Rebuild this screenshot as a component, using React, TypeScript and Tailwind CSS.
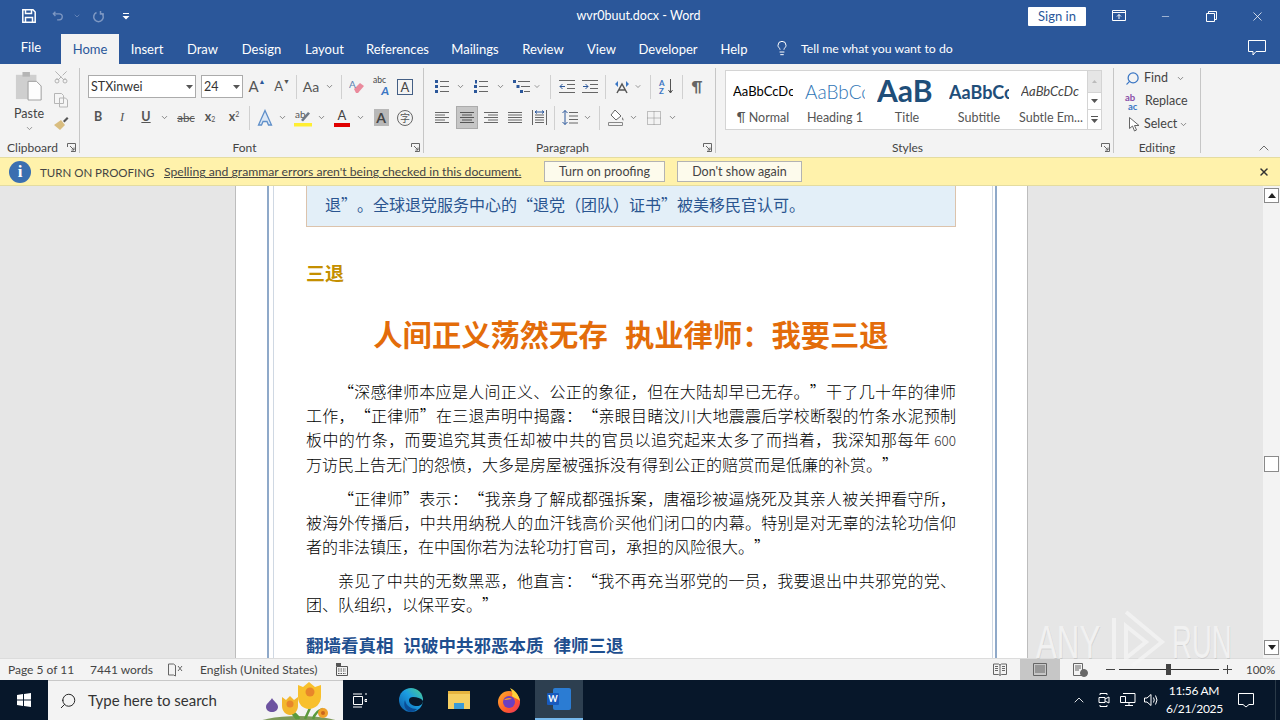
import React from "react";
import { ChevronDown, ChevronUp, Lightbulb, Search, Minus, X, Scissors } from "lucide-react";

const Chev = ({ c = "text-[#666]" }: { c?: string }) => <ChevronDown className={`w-[9px] h-[9px] ${c}`} strokeWidth={2} />;
const Sep = ({ c }: { c: string }) => <div className={`w-px h-[24px] bg-[#d0d0d0] shrink-0 ${c}`} />;

function Cell({ c, children }: { c: string; children?: React.ReactNode }) {
  return <div className={`flex items-center justify-center shrink-0 h-full ${c}`}>{children}</div>;
}

const Launcher = () => (
  <svg width="9" height="9" viewBox="0 0 9 9" className="absolute right-[3px] top-[5px]" fill="none" stroke="#666">
    <path d="M.5 4V.5H8.500V8.500H4M3 3l4 4M7 4.500V7H4.500" />
  </svg>
);

function Lines({ n, w = 14, color = "#666", align = "left" }: { n: number; w?: number; color?: string; align?: string }) {
  const rows = Array.from({ length: n }, (_, i) => i);
  return (
    <svg width={w} height="13" viewBox={`0 0 ${w} 13`} stroke={color}>
      {rows.map((i) => {
        const short = i % 2 === 1 && align !== "full";
        const len = short ? w - 4 : w;
        const x = align === "right" ? w - len : align === "center" ? (w - len) / 2 : 0;
        return <path key={i} d={`M${x} ${1.5 + i * 2.5}h${len}`} />;
      })}
    </svg>
  );
}

function Group({ c, label, launcher = true, children }: { c: string; label: string; launcher?: boolean; children: React.ReactNode }) {
  return (
    <div className={`flex flex-col shrink-0 h-full ${c}`}>
      <div className="flex-1 min-h-0">{children}</div>
      <div className={`relative h-[19px] text-center text-[12px] leading-[19px] text-[#444] ${launcher ? "pr-[14px]" : ""}`}>
        {label}
        {launcher && <Launcher />}
      </div>
    </div>
  );
}

const GroupSep = () => <div className="w-px h-[85px] mt-[4px] bg-[#c6c6c6] shrink-0" />;

const tabs = [
  ["Insert", "w-[56px]"],
  ["Draw", "w-[55px]"],
  ["Design", "w-[63px]"],
  ["Layout", "w-[63px]"],
  ["References", "w-[83px]"],
  ["Mailings", "w-[72px]"],
  ["Review", "w-[64px]"],
  ["View", "w-[53px]"],
  ["Developer", "w-[80px]"],
  ["Help", "w-[52px]"],
];

function TitleBar() {
  return (
    <div className="h-[32px] flex items-center text-white">
      <Cell c="w-[58px] justify-start pl-[22px]">
        <svg width="14" height="14" viewBox="0 0 14 14" fill="none" stroke="#fff" strokeWidth="1.500">
          <path d="M.800.800H11L13.200 3V13.200H.800Z" />
          <path d="M3.500 1v3.500h6V1M3.500 13V8.500h7V13" />
        </svg>
      </Cell>
      <Cell c="w-[12px] -ml-[6px]">
        <svg width="14" height="12" viewBox="0 0 14 12" fill="none" stroke="#7d97c2" strokeWidth="1.500">
          <path d="M4 1 1.500 3.500 4 6M2 3.500h6.500a3.500 3.500 0 0 1 0 7H6" />
        </svg>
      </Cell>
      <Cell c="w-[10px] ml-[8px]"><ChevronDown className="w-[8px] h-[8px] text-[#7d97c2]" /></Cell>
      <Cell c="w-[14px] ml-[9px]">
        <svg width="13" height="13" viewBox="0 0 13 13" fill="none" stroke="#7d97c2" strokeWidth="1.500">
          <path d="M8.500 2.500a4.800 4.800 0 1 1-4 0M8.500 1v3H12" />
        </svg>
      </Cell>
      <Cell c="w-[10px] ml-[16px]">
        <svg width="8" height="8" viewBox="0 0 8 8" fill="#fff"><path d="M1 1h6v1H1zM.500 4h7L4 7.500z" /></svg>
      </Cell>
      <div className="ml-[445px] w-[125px] text-center text-[12.500px] whitespace-nowrap">wvr0buut.docx - Word</div>
      <div className="ml-[327px] w-[58px] h-[19px] bg-white rounded-[1px] text-[#2b579a] text-[13px] leading-[19px] text-center">Sign in</div>
      <Cell c="w-[14px] ml-[26px]">
        <svg width="14" height="12" viewBox="0 0 14 12" fill="none" stroke="#fff">
          <path d="M.500.500h13v10H.500zM.500 2.500h13M7 9V4.500M5 6.500l2-2 2 2" />
        </svg>
      </Cell>
      <Cell c="w-[11px] ml-[34px]"><Minus className="w-[11px] h-[11px]" strokeWidth={1.200} /></Cell>
      <Cell c="w-[11px] ml-[35px]">
        <svg width="11" height="11" viewBox="0 0 11 11" fill="none" stroke="#fff"><path d="M.500 2.500h8v8h-8zM2.500 2.500v-2h8v8h-2" /></svg>
      </Cell>
      <Cell c="w-[12px] ml-[34px]"><X className="w-[15px] h-[15px] shrink-0" strokeWidth={1.200} /></Cell>
    </div>
  );
}

function TabBar() {
  return (
    <div className="h-[32px] flex text-white text-[13px]">
      <div className="w-[61px] pt-[6px] pl-[1px] text-center">File</div>
      <div className="w-[58px] mt-[2px] bg-[#f3f3f3] text-[#2b579a] text-center pt-[6px]">Home</div>
      {tabs.map(([name, w]) => (
        <div key={name} className={`${w} text-center pt-[8px] whitespace-nowrap`}>{name}</div>
      ))}
      <div className="ml-[14px] w-[14px] pt-[8px]"><Lightbulb className="w-[16px] h-[16px]" strokeWidth={1.500} /></div>
      <div className="ml-[13px] pt-[8px] text-[12.300px] whitespace-nowrap">Tell me what you want to do</div>
      <div className="ml-auto mr-[14px] pt-[8px]">
        <svg width="18" height="16" viewBox="0 0 18 16" fill="none" stroke="#fff"><path d="M.500.500h17v11H8l-3 3.500v-3.500H.500z" /></svg>
      </div>
    </div>
  );
}

function Clipboard() {
  return (
    <Group c="w-[79px]" label="Clipboard">
      <div className="flex h-full">
        <div className="w-[58px] flex flex-col items-center pt-[6px]">
          <svg width="28" height="32" viewBox="0 0 30 32">
            <path d="M1 4h22v26H1z" fill="#cfcfcf" />
            <path d="M8 1h8v5H8z" fill="#b5b5b5" />
            <path d="M14 11h9l5 5v15H14z" fill="#fdfdfd" stroke="#9a9a9a" />
          </svg>
          <div className="text-[12.500px] leading-[16px] mt-[4px] text-[#444]">Paste</div>
          <ChevronDown className="w-[9px] h-[9px] mt-[2px] text-[#777]" />
        </div>
        <div className="w-[16px] -ml-[5px] flex flex-col items-center pt-[5px] gap-[7px]">
          <Scissors className="w-[16px] h-[16px] text-[#a9a9a9] rotate-[-90deg]" strokeWidth={1.300} />
          <svg width="16" height="16" viewBox="0 0 16 16" fill="#f5f5f5" stroke="#b5b5b5"><path d="M1.500 1.500h7l2 2v8h-9zM6.500 6h6l2 2v7h-8z" /></svg>
          <svg width="16" height="16" viewBox="0 0 16 16"><path d="M1 10 8 5l4 5-5 5z" fill="#d9bd7f" /><path d="m10 6 4-4 1.500 1.500-4 4z" fill="#555" /></svg>
        </div>
      </div>
    </Group>
  );
}

function Font() {
  return (
    <Group c="w-[343px]" label="Font">
      <div className="pt-[11px]">
        <div className="flex h-[23px] items-center">
          <div className="ml-[8px] w-[108px] h-[23px] bg-white border border-[#ababab] flex items-center justify-between pl-[2px] pr-[1px] text-[12.500px] text-[#333]">
            <span className="pt-[1px]">STXinwei</span>
            <svg width="7" height="4" viewBox="0 0 7 4" fill="#555" className="mr-[1px]"><path d="M0 0h7L3.500 4z" /></svg>
          </div>
          <div className="ml-[5px] w-[42px] h-[23px] bg-white border border-[#ababab] flex items-center justify-between pl-[2px] pr-[1px] text-[12.500px] text-[#333]">
            <span className="pt-[1px]">24</span>
            <svg width="7" height="4" viewBox="0 0 7 4" fill="#555" className="mr-[1px]"><path d="M0 0h7L3.500 4z" /></svg>
          </div>
          <Cell c="w-[24px] ml-[2px] text-[15px] text-[#555]">A<span className="text-[7px] -mt-[10px] text-[#2b579a]">▲</span></Cell>
          <Cell c="w-[24px] ml-[1px] text-[13px] text-[#555]">A<span className="text-[7px] -mt-[10px] text-[#555]">▼</span></Cell>
          <Sep c="ml-[2px]" />
          <Cell c="w-[24px] ml-[2px] text-[14px] text-[#555]">Aa</Cell>
          <Cell c="w-[12px]"><Chev /></Cell>
          <Sep c="ml-[6px]" />
          <Cell c="w-[24px] ml-[3px]">
            <svg width="16" height="16" viewBox="0 0 16 16"><path d="m5 10 6-6 4 3-6 7H7z" fill="#ea8a9c" /><text x="0" y="9" fontSize="10" fill="#5b7fb0">A</text></svg>
          </Cell>
          <Cell c="w-[24px]">
            <div className="relative w-[16px] h-[18px] leading-none">
              <span className="absolute left-0 -top-[2px] text-[8.500px] text-[#444]">abc</span>
              <span className="absolute right-0 top-[7px] text-[12px] italic font-bold text-[#3a76c4]">A</span>
            </div>
          </Cell>
          <Cell c="w-[24px]"><div className="w-[16px] h-[16px] border border-[#445f85] text-[13px] leading-[15px] text-center text-[#444]">A</div></Cell>
        </div>
        <div className="flex h-[23px] items-center mt-[8px] text-[#555]">
          <Cell c="w-[24px] ml-[6px] text-[12.500px] font-bold">B</Cell>
          <Cell c="w-[24px] text-[12.500px] italic font-['Liberation_Serif',serif]">I</Cell>
          <Cell c="w-[24px] text-[12.500px] font-bold underline">U</Cell>
          <Cell c="w-[12px]"><Chev /></Cell>
          <Cell c="w-[24px] ml-[4px] text-[11.500px] line-through">abc</Cell>
          <Cell c="w-[24px] text-[12.500px] font-bold">x<sub className="text-[7px] font-normal">2</sub></Cell>
          <Cell c="w-[24px] text-[12.500px] font-bold">x<sup className="text-[7px] font-normal">2</sup></Cell>
          <Sep c="ml-[3px]" />
          <Cell c="w-[24px] ml-[3px]">
            <svg width="18" height="18" viewBox="0 0 18 18" fill="#dbe7f5" stroke="#5f8fc9" strokeWidth="1.300"><path d="M9 1.500 15.500 16H12.500L11 12.500H7L5.500 16H2.500Z" /></svg>
          </Cell>
          <Cell c="w-[10px]"><Chev /></Cell>
          <Cell c="w-[24px] ml-[4px]">
            <div className="w-[18px] h-[18px] relative leading-none">
              <span className="absolute left-[1px] top-0 text-[10px] text-[#555]">ab</span>
              <svg width="18" height="18" viewBox="0 0 18 18" className="absolute inset-0"><path d="m7 11 7-8 2 1.500-7 8z" fill="#6f7a87" /><path d="M0 14h18v3.500H0z" fill="#ffee33" /></svg>
            </div>
          </Cell>
          <Cell c="w-[10px] ml-[1px]"><Chev /></Cell>
          <Cell c="w-[24px] ml-[4px]">
            <div className="flex flex-col items-center leading-none">
              <span className="text-[13px] text-[#444] h-[13px]">A</span>
              <span className="w-[16px] h-[4px] mt-[1px] bg-[#e00000]" />
            </div>
          </Cell>
          <Cell c="w-[10px] ml-[1px]"><Chev /></Cell>
          <Cell c="w-[24px] ml-[4px]"><div className="w-[15px] h-[17px] bg-[#b8b8b8] text-[14px] leading-[17px] text-center font-bold text-[#444]">A</div></Cell>
          <Cell c="w-[24px]"><div className="w-[16px] h-[16px] rounded-full border border-[#666] text-[10px] leading-[14px] text-center font-['Noto_Sans_CJK_SC',sans-serif]">字</div></Cell>
        </div>
      </div>
    </Group>
  );
}

function Paragraph() {
  return (
    <Group c="w-[291px]" label="Paragraph">
      <div className="pt-[11px]">
        <div className="flex h-[23px] items-center">
          <Cell c="w-[24px] ml-[6px]">
            <svg width="14" height="13" viewBox="0 0 14 13" stroke="#666"><path d="M5 1.500h9M5 6.500h9M5 11.500h9" /><path d="M0 0h3v3H0zM0 5h3v3H0zM0 10h3v3H0z" fill="#2b579a" stroke="none" /></svg>
          </Cell>
          <Cell c="w-[12px]"><Chev /></Cell>
          <Cell c="w-[24px] ml-[3px]">
            <svg width="14" height="13" viewBox="0 0 14 13" stroke="#666"><path d="M5 1.500h9M5 6.500h9M5 11.500h9" /><path d="M1 0h2v3.500H1zM0 5h3v3H0zM0 10h3v3H0z" fill="#2b579a" stroke="none" /></svg>
          </Cell>
          <Cell c="w-[12px] ml-[1px]"><Chev /></Cell>
          <Cell c="w-[24px] ml-[3px]">
            <svg width="17" height="13" viewBox="0 0 17 13" stroke="#666"><path d="M5 1.500h12M8 6.500h9M11 11.500h6" /><path d="M0 0h3v3H0zM3.500 5h3v3h-3zM7 10h3v3H7z" fill="#2b579a" stroke="none" /></svg>
          </Cell>
          <Cell c="w-[8px]"><Chev /></Cell>
          <Sep c="ml-[9px]" />
          <Cell c="w-[24px] ml-[4px]">
            <svg width="16" height="13" viewBox="0 0 16 13" stroke="#666"><path d="M0 .500h16M8 4.500h8M8 8.500h8M0 12.500h16" /><path d="M6 6.500H1M3.500 4 1 6.500 3.500 9" stroke="#2b579a" fill="none" /></svg>
          </Cell>
          <Cell c="w-[22px]">
            <svg width="16" height="13" viewBox="0 0 16 13" stroke="#666"><path d="M0 .500h16M8 4.500h8M8 8.500h8M0 12.500h16" /><path d="M1 6.500h5M3.500 4 6 6.500 3.500 9" stroke="#2b579a" fill="none" /></svg>
          </Cell>
          <Sep c="ml-[4px]" />
          <Cell c="w-[24px] ml-[4px]">
            <svg width="16" height="14" viewBox="0 0 16 14" fill="none"><path d="M3 13 8 4l5 9M5 10h6" stroke="#555" strokeWidth="1.500" /><path d="M1 4 4 1v6zM15 4l-3-3v6z" fill="#3a76c4" /></svg>
          </Cell>
          <Cell c="w-[8px]"><Chev /></Cell>
          <Sep c="ml-[8px]" />
          <Cell c="w-[24px] ml-[3px]">
            <div className="relative w-[14px] h-[16px] leading-none font-bold text-[8px] text-[#3a76c4]">
              <span className="absolute left-0 top-0">A</span>
              <span className="absolute left-0 top-[8px]">Z</span>
              <svg width="5" height="15" viewBox="0 0 5 15" className="absolute right-0 top-0" fill="none" stroke="#555"><path d="M2.500 0v14M.500 11l2 3 2-3" /></svg>
            </div>
          </Cell>
          <Sep c="ml-[4px]" />
          <Cell c="w-[24px] ml-[2px] text-[15px] font-bold text-[#666]">¶</Cell>
        </div>
        <div className="flex h-[23px] items-center mt-[8px]">
          <Cell c="w-[24px] ml-[6px]"><Lines n={5} /></Cell>
          <Cell c="w-[22px] ml-[2px] bg-[#c6c6c6] border border-[#ababab]"><Lines n={5} align="center" color="#555" /></Cell>
          <Cell c="w-[24px] ml-[1px]"><Lines n={5} align="right" /></Cell>
          <Cell c="w-[24px]"><Lines n={5} align="full" /></Cell>
          <Cell c="w-[24px]">
            <svg width="15" height="15" viewBox="0 0 15 15" fill="none" stroke="#666"><path d="M.500 0v15M14.500 0v15M3 5h9M3 7.500h9M3 10h9M3 12.500h9" /><path d="M3 2h9M5 .500 3 2l2 1.500M10 .500 12 2l-2 1.500" stroke="#2b579a" /></svg>
          </Cell>
          <Sep c="ml-[3px]" />
          <Cell c="w-[24px] ml-[3px]">
            <svg width="16" height="15" viewBox="0 0 16 15" fill="none" stroke="#666"><path d="M7 2.500h9M7 6h9M7 9.500h9M7 13h9" /><path d="M3 .500v14M.500 3 3 .500 5.500 3M.500 12 3 14.500 5.500 12" stroke="#2b579a" /></svg>
          </Cell>
          <Cell c="w-[10px]"><Chev /></Cell>
          <Sep c="ml-[7px]" />
          <Cell c="w-[24px] ml-[4px]">
            <svg width="17" height="17" viewBox="0 0 17 17" fill="none"><path d="m7 1 6 6-5 4-5-5z" fill="#fff" stroke="#666" /><path d="M14 8q2 2 1.500 3.500-1.500 0-1.500-3.500z" fill="#666" /><path d="M.500 13.500h14v3H.500z" fill="#f3f3f3" stroke="#888" /></svg>
          </Cell>
          <Cell c="w-[10px]"><Chev /></Cell>
          <Cell c="w-[24px] ml-[4px]">
            <svg width="14" height="14" viewBox="0 0 14 14" fill="none" stroke="#888" strokeDasharray="1 1"><path d="M.500.500h13v13H.500zM7 .500v13M.500 7h13" /></svg>
          </Cell>
          <Cell c="w-[10px] ml-[1px]"><Chev /></Cell>
        </div>
      </div>
    </Group>
  );
}

function StyleItem({ preview, label }: { preview: React.ReactNode; label: string }) {
  return (
    <div className="w-[72px] flex flex-col items-center overflow-hidden">
      <div className="h-[36px] w-[60px] overflow-hidden flex items-center whitespace-nowrap">{preview}</div>
      <div className="text-[12.500px] leading-[16px] text-[#555] whitespace-nowrap">{label}</div>
    </div>
  );
}

function Styles() {
  return (
    <Group c="w-[397px]" label="Styles">
      <div className="pt-[6px] pl-[9px]">
        <div className="w-[377px] h-[60px] bg-white border border-[#d4d4d4] flex">
          <div className="flex flex-1 pl-[1px] pt-[3px]">
            <StyleItem preview={<span className="text-[13px] text-black">AaBbCcDc</span>} label="¶ Normal" />
            <StyleItem preview={<span className="text-[19px] text-[#2e74b5] font-light">AaBbCc</span>} label="Heading 1" />
            <StyleItem preview={<span className="text-[30px] font-bold text-[#1f4e79] leading-[30px] pb-[4px]">AaB</span>} label="Title" />
            <StyleItem preview={<span className="text-[18px] font-bold text-[#1f4e79]">AaBbCc</span>} label="Subtitle" />
            <StyleItem preview={<span className="text-[13px] italic text-[#444]">AaBbCcDc</span>} label="Subtle Em..." />
          </div>
          <div className="w-[14px] flex flex-col border-l border-[#d4d4d4]">
            <div className="h-[21px] bg-[#e6e6e6] flex items-center justify-center"><svg width="5" height="3" viewBox="0 0 5 3" fill="#bbb"><path d="M0 3h5L2.500 0z" /></svg></div>
            <div className="h-[18px] border-y border-[#d4d4d4] flex items-center justify-center"><svg width="7" height="4" viewBox="0 0 7 4" fill="#555"><path d="M0 0h7L3.500 4z" /></svg></div>
            <div className="flex-1 flex flex-col gap-[2px] items-center justify-center"><span className="w-[7px] h-px bg-[#555]" /><svg width="7" height="4" viewBox="0 0 7 4" fill="#555"><path d="M0 0h7L3.500 4z" /></svg></div>
          </div>
        </div>
      </div>
    </Group>
  );
}

function Editing() {
  return (
    <Group c="w-[86px]" label="Editing" launcher={false}>
      <div className="pt-[3px] pl-[11px] text-[12.500px] text-[#444]">
        <div className="flex items-center h-[23px]">
          <Search className="w-[15px] h-[15px] text-[#3a76c4] -scale-x-100" strokeWidth={2} />
          <span className="ml-[4px]">Find</span>
          <ChevronDown className="w-[9px] h-[9px] ml-[8px] text-[#666]" />
        </div>
        <div className="flex items-center h-[23px]">
          <div className="w-[16px] text-[9.500px] leading-[9px] font-bold"><span className="text-[#8a4fa8] block">ab</span><span className="text-[#3a76c4] block pl-[3px]">ac</span></div>
          <span className="ml-[4px]">Replace</span>
        </div>
        <div className="flex items-center h-[23px]">
          <svg width="11" height="15" viewBox="0 0 11 15" fill="#fff" stroke="#666" className="ml-[4px]"><path d="M.500.500v11l3-2.500 2 5 2-1-2-4.500h4.500z" /></svg>
          <span className="ml-[4px]">Select</span>
          <ChevronDown className="w-[9px] h-[9px] ml-[2px] text-[#666]" />
        </div>
      </div>
    </Group>
  );
}

function Ribbon() {
  return (
    <div className="h-[93px] bg-[#f3f3f3] flex">
      <Clipboard />
      <GroupSep />
      <Font />
      <GroupSep />
      <Paragraph />
      <GroupSep />
      <Styles />
      <GroupSep />
      <Editing />
      <GroupSep />
      <div className="flex-1 flex justify-end items-end pr-[8px] pb-[1px]">
        <ChevronUp className="w-[16px] h-[16px] text-[#555]" strokeWidth={1.300} />
      </div>
    </div>
  );
}

function ProofBar() {
  return (
    <div className="h-[29px] bg-[#fff2ab] border-y border-[#e4dca0] flex items-center text-[12.500px] text-[#444]">
      <div className="ml-[9px] w-[22px] h-[22px] rounded-full bg-[#3a6fb0] text-white flex items-center justify-center font-bold text-[17px] font-['Liberation_Serif',serif]">i</div>
      <span className="ml-[9px] w-[124px] pt-[2px] text-[11.500px] whitespace-nowrap">TURN ON PROOFING</span>
      <span className="underline w-[380px] pt-[2px] text-[12.200px] whitespace-nowrap">Spelling and grammar errors aren't being checked in this document.</span>
      <div className="w-[121px] h-[21px] bg-[#fdfbec] border border-[#b3b3b3] text-center leading-[19px]">Turn on proofing</div>
      <div className="ml-[12px] w-[125px] h-[21px] bg-[#fdfbec] border border-[#b3b3b3] text-center leading-[19px]">Don't show again</div>
      <X className="ml-auto mr-[10px] w-[12px] h-[12px] text-[#333]" strokeWidth={3} />
    </div>
  );
}

const paragraphs: React.ReactNode[][] = [
  [
    "“深感律师本应是人间正义、公正的象征，但在大陆却早已无存。”干了几十年的律师",
    "工作，“正律师”在三退声明中揭露：“亲眼目睹汶川大地震震后学校断裂的竹条水泥预制",
    <>板中的竹条，而要追究其责任却被中共的官员以追究起来太多了而挡着，我深知那每年 <span className="text-[13.500px] text-[#333]">600</span></>,
    "万访民上告无门的怨愤，大多是房屋被强拆没有得到公正的赔赏而是低廉的补赏。”",
  ],
  [
    "“正律师”表示：“我亲身了解成都强拆案，唐福珍被逼烧死及其亲人被关押看守所，",
    "被海外传播后，中共用纳税人的血汗钱高价买他们闭口的内幕。特别是对无辜的法轮功信仰",
    "者的非法镇压，在中国你若为法轮功打官司，承担的风险很大。”",
  ],
  [
    "亲见了中共的无数黑恶，他直言：“我不再充当邪党的一员，我要退出中共邪党的党、",
    "团、队组织，以保平安。”",
  ],
];

function Page() {
  return (
    <div className="w-[793px] shrink-0 bg-white border-x border-[#bdbdbd] pl-[31px] pr-[30px] overflow-hidden font-['Noto_Sans_CJK_SC',sans-serif] [text-spacing-trim:space-all]">
      <div className="h-full border-x-2 border-x-[#8fa9c9] pl-[4px] pr-[2px]">
        <div className="h-full border-x border-x-[#cfd8e3] pl-[32px] pr-[36px]">
          <div className="h-[41px] bg-[#e3eff8] border-x border-b border-[#dcc3ac] pl-[18px] pt-[6px] text-[16px] leading-[24px] text-[#2a5590] whitespace-nowrap">
            退”。全球退党服务中心的“退党（团队）证书”被美移民官认可。
          </div>
          <div className="mt-[34px] text-[19px] leading-[24px] font-bold text-[#c48f00]">三退</div>
          <div className="mt-[28px] text-center text-[29.300px] leading-[40px] font-bold text-[#e36c0a] whitespace-pre [word-spacing:2px]">人间正义荡然无存  执业律师：我要三退</div>
          <div className="mt-[26px] text-[16px] leading-[24px] font-light text-black">
            {paragraphs.map((lines, i) => (
              <div key={i} className={i > 0 ? "mt-[10px]" : ""}>
                {lines.map((line, j) => (
                  <div key={j} className={`${j === lines.length - 1 ? "" : "text-justify [text-align-last:justify]"} ${j === 0 ? "indent-[32px]" : ""}`}>
                    {line}
                  </div>
                ))}
              </div>
            ))}
          </div>
          <div className="mt-[17px] text-[17.500px] leading-[24px] font-bold text-[#1f4f8f] whitespace-pre [word-spacing:1px]">翻墙看真相  识破中共邪恶本质  律师三退</div>
        </div>
      </div>
    </div>
  );
}

function ScrollBar() {
  return (
    <div className="w-[17px] bg-[#f3f3f3] flex flex-col items-center pt-[2px] pb-[3px]">
      <div className="w-[15px] h-[15px] bg-white border border-[#8a8a8a] flex items-center justify-center">
        <svg width="8" height="5" viewBox="0 0 8 5" fill="#222"><path d="M0 5h8L4 0z" /></svg>
      </div>
      <div className="w-[15px] h-[16px] mt-[253px] bg-white border border-[#8a8a8a]" />
      <div className="w-[15px] h-[15px] mt-auto bg-white border border-[#8a8a8a] flex items-center justify-center">
        <svg width="8" height="5" viewBox="0 0 8 5" fill="#222"><path d="M0 0h8L4 5z" /></svg>
      </div>
    </div>
  );
}

function StatusBar() {
  return (
    <div className="h-[22px] bg-[#f3f3f3] border-t border-[#dcdcdc] flex items-center text-[12px] text-[#444]">
      <span className="ml-[8px] w-[82px] whitespace-nowrap">Page 5 of 11</span>
      <span className="w-[78px] whitespace-nowrap">7441 words</span>
      <svg width="16" height="14" viewBox="0 0 16 14" fill="none" stroke="#666">
        <path d="M.500 1h5l2 1.500V13l-2-1H.500zM7.500 2.500V13" />
        <path d="m10 3 4 5M14 3l-4 5" />
      </svg>
      <span className="ml-[16px] w-[136px] whitespace-nowrap">English (United States)</span>
      <svg width="12" height="13" viewBox="0 0 12 13" fill="none" stroke="#555">
        <path d="M.500 3.500h11v9H.500z" /><path d="M0 0h5v3H0z" fill="#555" stroke="none" /><path d="M2 6h8M2 8h8M2 10.500h8" strokeDasharray="1.500 1" />
      </svg>
      <Cell c="w-[16px] ml-[644px]">
        <svg width="14" height="13" viewBox="0 0 14 13" fill="none" stroke="#666"><path d="M.500 1h5L7 2l1.500-1h5v10.500h-5L7 12.500l-1.500-1h-5zM7 2v10M2 3.500h3M2 5.500h3M2 7.500h3M9 3.500h3M9 5.500h3M9 7.500h3" /></svg>
      </Cell>
      <div className="w-[40px] h-full ml-[12px] bg-[#c6c6c6] flex items-center justify-center">
        <svg width="14" height="13" viewBox="0 0 14 13" fill="none" stroke="#666"><path d="M.500.500h13v12H.500zM2 3h10M2 5h10M2 7h10M2 9h10" /></svg>
      </div>
      <Cell c="w-[16px] ml-[12px]">
        <svg width="15" height="14" viewBox="0 0 15 14" fill="none" stroke="#666"><path d="M.500.500h9v12h-9zM2 3h6M2 5h6M2 7h4" /><circle cx="11" cy="10" r="3.500" fill="#666" /></svg>
      </Cell>
      <span className="ml-[18px] w-[9px] h-px bg-[#444]" />
      <div className="relative w-[100px] h-px bg-[#333] ml-[4px]">
        <span className="absolute left-[47px] -top-[5px] w-[5px] h-[11px] bg-[#444]" />
      </div>
      <span className="ml-[4px] relative w-[9px] h-px bg-[#444]"><span className="absolute left-[4px] -top-[4px] w-px h-[9px] bg-[#444]" /></span>
      <span className="ml-[14px] text-[11.500px] whitespace-nowrap">100%</span>
    </div>
  );
}

const Flowers = () => (
  <svg width="88" height="40" viewBox="0 0 88 40" className="ml-auto shrink-0">
    <ellipse cx="44" cy="44" rx="44" ry="9" fill="#7e9a5a" />
    <path d="M55 27 50 38M37 32l5 6M58 38c2-6 6-9 10-10M44 38c-2-5-6-7-9-8" stroke="#5c9a3c" strokeWidth="2.500" fill="none" />
    <path d="M17 17c1 3 6 5 6 9 0 3-3 5-6 5s-6-2-6-5c0-4 5-6 6-9z" fill="#6d53a0" />
    <path d="M27 16l4 3 4-4 4 4 4-3v9c0 5-4 9-8 9s-8-4-8-9z" fill="#f3b72d" />
    <path d="M43 4l5 2 6-5 6 5 6-2v12c0 7-6 12-12 12s-11-5-11-12z" fill="#f8c02c" />
    <circle cx="35" cy="23" r="3.500" fill="#e8862a" />
    <circle cx="55" cy="11" r="4.500" fill="#e8862a" />
    <circle cx="68" cy="32" r="5" fill="#f0a22a" />
    <circle cx="68" cy="32" r="2" fill="#c9661f" />
  </svg>
);

const Edge = () => (
  <svg width="24" height="24" viewBox="0 0 24 24" className="ml-[32px] shrink-0">
    <defs>
      <linearGradient id="edge" x1="0" y1="1" x2="1" y2="0">
        <stop offset="0" stopColor="#0c59a4" />
        <stop offset="0.55" stopColor="#1b9de2" />
        <stop offset="1" stopColor="#4fd18b" />
      </linearGradient>
    </defs>
    <circle cx="12" cy="12" r="12" fill="url(#edge)" />
    <path d="M24 13c0 3-3 5-6 5-4 0-8-2-8-6 0-2 2-3 4-3 4 0 8 1 10 4z" fill="#07172a" />
    <path d="M11 24C6 22 4 17 6 12c1 6 6 9 12 9-2 2-4 3-7 3z" fill="#0a4d96" />
  </svg>
);

const Firefox = () => (
  <svg width="24" height="25" viewBox="0 0 24 25" className="ml-[27px] shrink-0">
    <defs>
      <linearGradient id="fox" x1="0" y1="0" x2="1" y2="1">
        <stop offset="0" stopColor="#ffb12a" />
        <stop offset="0.6" stopColor="#ff5a2a" />
        <stop offset="1" stopColor="#e8306a" />
      </linearGradient>
    </defs>
    <circle cx="12" cy="14" r="11" fill="url(#fox)" />
    <path d="M13 0c5 2 9 7 10 13-3-3-6-3-8-5 1-2 0-5-2-8z" fill="#ffd23a" />
    <circle cx="12" cy="14" r="6" fill="#6b3fc0" />
    <path d="M7 12c2-2 6-3 8-1-2 0-5 1-8 1z" fill="#ff9a2a" />
  </svg>
);

function Taskbar() {
  return (
    <div className="h-[40px] bg-[#07172a] flex items-center text-white">
      <div className="w-[48px] flex justify-center">
        <svg width="14" height="14" viewBox="0 0 14 14" fill="#fff"><path d="M0 2 6 1v5.500H0zM7 .900 14 0v6.500H7zM0 7.500h6V13l-6-1zM7 7.500h7V14l-7-1z" /></svg>
      </div>
      <div className="w-[295px] h-full bg-[#f3f3f3] flex items-center overflow-hidden text-[#333] border-t border-[#c8c8c8]">
        <Search className="ml-[11px] w-[18px] h-[18px] shrink-0 -scale-x-100 text-[#222]" strokeWidth={1.300} />
        <span className="ml-[11px] text-[15px] whitespace-nowrap">Type here to search</span>
        <Flowers />
      </div>
      <svg width="14" height="15" viewBox="0 0 14 15" fill="none" stroke="#fff" className="ml-[10px] shrink-0">
        <path d="M.500 3.500h9v8h-9zM0 1h9M0 14h9M12 1h2M12 6.500h2v2h-2z" />
      </svg>
      <Edge />
      <div className="ml-[25px] w-[22px] h-[18px] bg-[#f5cf62] border-t-[3px] border-[#e6b43f] flex items-end justify-center">
        <span className="w-[10px] h-[6px] bg-[#3a9bd8]" />
      </div>
      <Firefox />
      <div className="ml-[14px] w-[48px] h-full bg-[#2d3f50] border-b-2 border-[#76b9ed] flex items-center justify-center">
        <div className="relative w-[18px] h-[22px] bg-[#2b7cd3] rounded-[2px] ml-[6px]">
          <span className="absolute -left-[6px] top-[5px] w-[12px] h-[12px] bg-[#185abd] rounded-[1px] text-[9px] leading-[12px] font-bold text-center text-white">W</span>
        </div>
      </div>
      <ChevronUp className="ml-[488px] w-[16px] h-[16px]" strokeWidth={1.300} />
      <svg width="12" height="16" viewBox="0 0 12 16" fill="none" stroke="#fff" className="ml-[11px]">
        <path d="M2 3V1.500h7V3M2 13v1.500h7V13M1 5.500h6v5H1zM7 7l4-2v6l-4-2" />
      </svg>
      <svg width="16" height="14" viewBox="0 0 16 14" fill="none" stroke="#fff" className="ml-[10px]">
        <path d="M3 .500h12v9H3M.500 3.500h5v6h-5zM9 9.500v3M5 12.500h8" />
      </svg>
      <svg width="16" height="14" viewBox="0 0 16 14" fill="none" stroke="#fff" className="ml-[8px]">
        <path d="M.500 5h2.500L7 1.500v11L3 9H.500zM9.500 4.500q1.500 2.500 0 5M11.500 2.500q3 4.500 0 9" />
      </svg>
      <div className="w-[56px] ml-[6px] text-center text-[12px] tracking-[-0.3px] leading-[18px] whitespace-nowrap">
        <div>11:56 AM</div>
        <div>6/21/2025</div>
      </div>
      <svg width="16" height="15" viewBox="0 0 16 15" fill="none" stroke="#fff" className="ml-[16px]">
        <path d="M.500.500h15v11h-4.500L8 14l-3-2.500H.500z" />
      </svg>
      <div className="ml-auto mr-[4px] w-px h-full bg-[#2a3a48]" />
    </div>
  );
}

export default function App() {
  return (
    <div className="relative w-[1280px] h-[720px] overflow-hidden bg-[#e6e6e6] flex flex-col font-['Lato',sans-serif]">
      <div className="bg-[#2b579a]">
        <TitleBar />
        <TabBar />
      </div>
      <Ribbon />
      <ProofBar />
      <div className="h-[472px] flex overflow-hidden">
        <div className="w-[235px] shrink-0" />
        <Page />
        <div className="flex-1" />
        <ScrollBar />
      </div>
      <StatusBar />
      <Taskbar />
      {/* ANY.RUN watermark sits over the window */}
      <div className="absolute left-[1036px] top-[608px] w-[200px] h-[64px] pointer-events-none opacity-70">
        <span className="absolute left-0 top-[8px] text-[46px] leading-[52px] font-['Liberation_Sans',sans-serif] text-[#f6f6f6] origin-left scale-x-[0.68] [text-shadow:1px_1px_0_rgba(0,0,0,0.12)]">ANY</span>
        <span className="absolute left-[136px] top-[8px] text-[46px] leading-[52px] font-['Liberation_Sans',sans-serif] text-[#f6f6f6] origin-left scale-x-[0.6] [text-shadow:1px_1px_0_rgba(0,0,0,0.12)]">RUN</span>
        <svg width="60" height="62" viewBox="0 0 60 62" className="absolute left-[72px] top-0" fill="none" stroke="#f6f6f6" strokeWidth="4">
          <path d="M6 10v42M18 4l36 30-30 24M18 18l20 16-20 16z" />
        </svg>
      </div>
    </div>
  );
}
